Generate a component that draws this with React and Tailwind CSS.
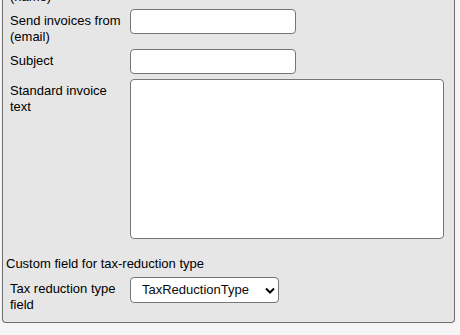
import { useState } from "react"

function Row({ label, children, fieldPad = "pb-[5px]" }) {
  return (
    <div className="flex items-start">
      <div className="w-[127px] shrink-0 pl-[7px] pr-[6px] pt-[4px] pb-[4px]">{label}</div>
      <div className={fieldPad}>{children}</div>
    </div>
  )
}

export default function App() {
  const [taxField, setTaxField] = useState("TaxReductionType")

  const inputClass =
    "block h-[25px] w-[166px] rounded-[4px] border border-[#767676] bg-white px-[2px] text-[13px] outline-none"

  return (
    <div className="h-[335px] w-[460px] overflow-hidden bg-[#f5f5f5] font-['Liberation_Sans',Arial,sans-serif] text-[13px] leading-4 text-black">
      <div className="-mt-[31px] ml-[2px] w-[453px] rounded-b-[4px] border-x border-b border-[#6e6e6e] bg-[#e6e6e6] pb-[5px]">
        {/* Sender details */}
        <Row label="Send invoices from (name)">
          <input type="text" className={inputClass} />
        </Row>
        <Row label="Send invoices from (email)">
          <input type="email" className={inputClass} />
        </Row>
        <Row label="Subject">
          <input type="text" className={inputClass} />
        </Row>
        <Row label="Standard invoice text">
          <textarea className="block h-[160px] w-[314px] resize-none rounded-[4px] border border-[#767676] bg-white p-[2px] text-[13px] outline-none" />
        </Row>

        {/* Tax reduction */}
        <div className="mt-[12px] pl-[3px]">Custom field for tax-reduction type</div>
        <div className="mt-[5px]">
          <Row label="Tax reduction type field" fieldPad="pb-0">
            <div className="relative">
              <select
                value={taxField}
                onChange={(e) => setTaxField(e.target.value)}
                className="block h-[26px] w-[149px] appearance-none rounded-[4px] border border-[#767676] bg-white pl-[11px] text-[13px] text-[#0a0a0a] outline-none"
              >
                <option>TaxReductionType</option>
              </select>
              <svg
                className="pointer-events-none absolute right-[4px] top-[10px]"
                width="10"
                height="7"
                viewBox="0 0 10 7"
              >
                <polyline points="1,1.5 5,5.5 9,1.5" fill="none" stroke="#000" strokeWidth="2" />
              </svg>
            </div>
          </Row>
        </div>
      </div>
    </div>
  )
}
